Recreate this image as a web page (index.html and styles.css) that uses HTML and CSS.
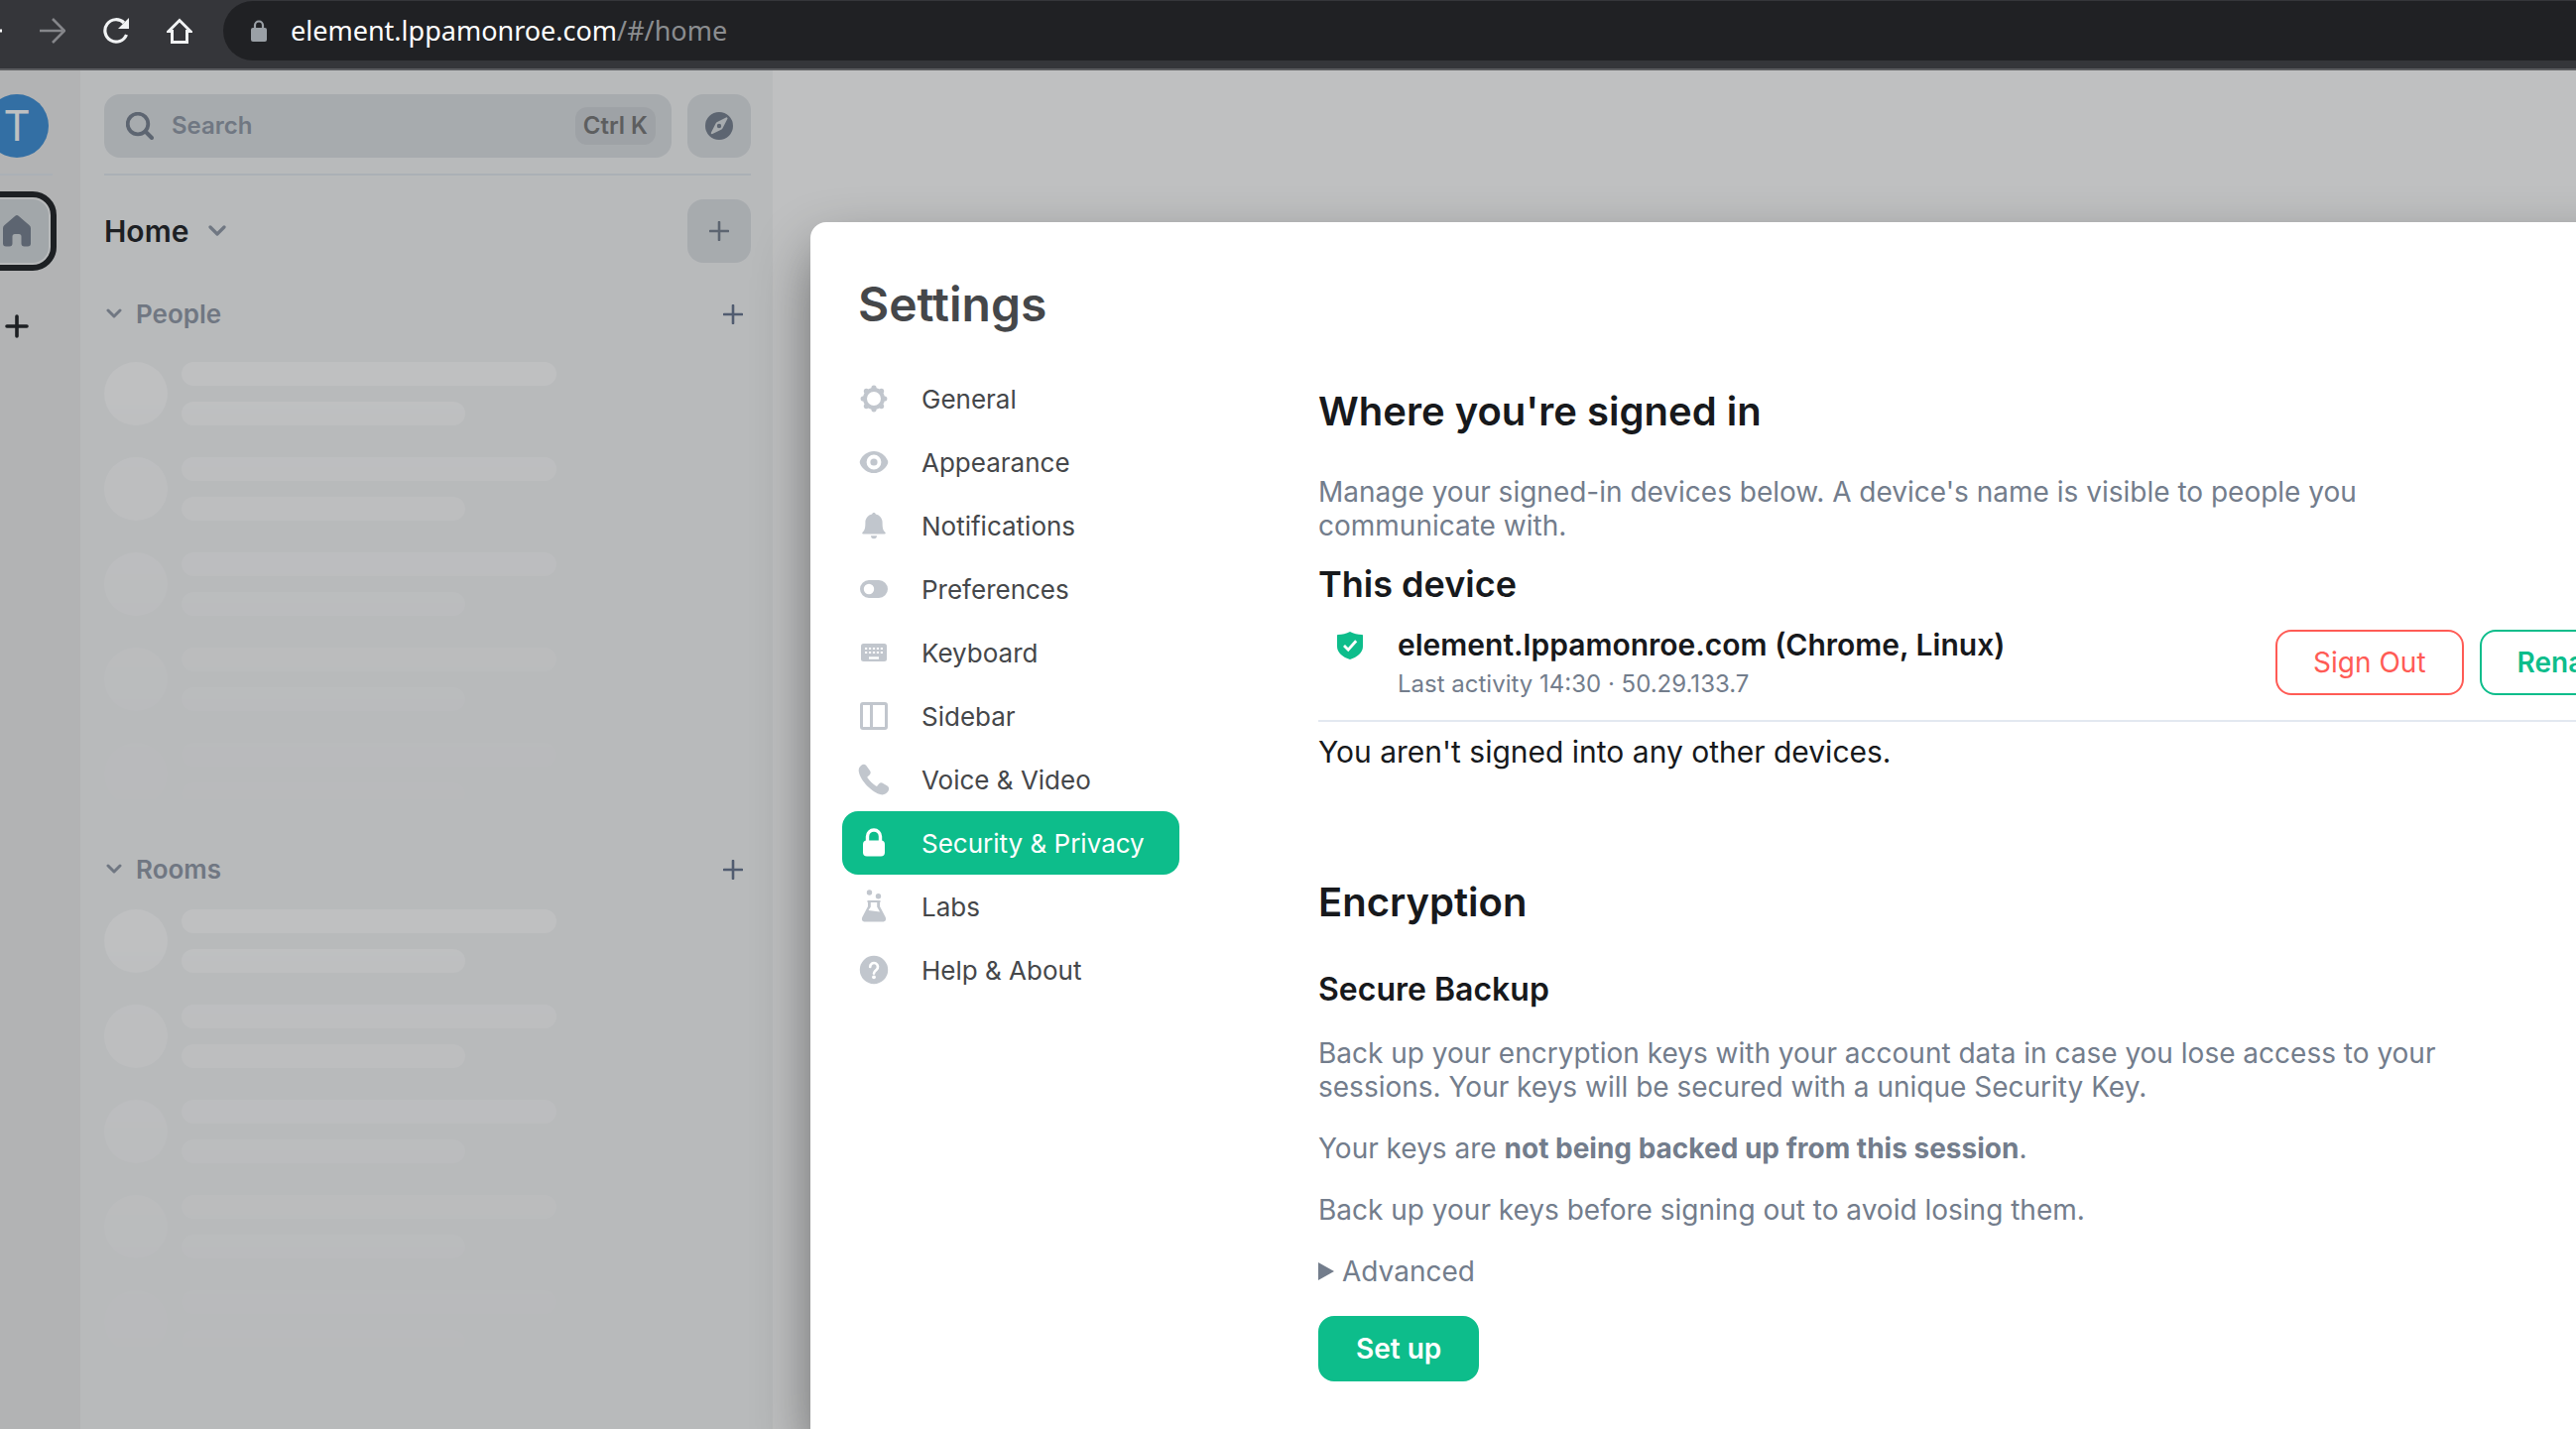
FILE: index.html
```html
<!DOCTYPE html>
<html lang="en">
<head>
<meta charset="utf-8">
<title>Element</title>
<link rel="stylesheet" href="styles.css">
</head>
<body>
<header class="browser-bar">
  <button class="nav-button" aria-label="Back"><svg viewBox="0 0 26 26"><path d="M26 13H3M14 1 2 13l12 12" fill="none" stroke="#fff" stroke-width="3"/></svg></button>
  <button class="nav-button nav-disabled" aria-label="Forward"><svg viewBox="0 0 26 26"><path d="M0 13h23M13 1l12 12-12 12" fill="none" stroke="currentColor" stroke-width="2.6"/></svg></button>
  <button class="nav-button" aria-label="Reload"><svg viewBox="0 0 26 26"><path d="M23.5 17A11.2 11.2 0 1 1 21 5" fill="none" stroke="currentColor" stroke-width="3.2"/><path d="M26 0v11H15z" fill="currentColor"/></svg></button>
  <button class="nav-button" aria-label="Home page"><svg viewBox="0 0 26 26"><path d="M2 13.5 13 2.500l11 11h-3.500V24.500h-15V13.500z" fill="none" stroke="currentColor" stroke-width="3"/></svg></button>
  <div class="address">
    <svg class="address-lock" viewBox="0 0 16 22"><path d="M4 9V5.500a4 4 0 0 1 8 0V9" fill="none" stroke="currentColor" stroke-width="2.200"/><rect y="8" width="16" height="14" rx="2" fill="currentColor"/></svg>
    <span class="address-text">element.lppamonroe.com<span class="address-path">/#/home</span></span>
  </div>
</header>

<div class="stage">
  <div class="app">
    <nav class="rail" aria-label="Spaces">
      <button class="avatar" aria-label="User menu">T</button>
      <hr class="rail-line">
      <button class="space-home" aria-label="Home"><span class="space-tile"><svg viewBox="0 0 28 32"><path d="M12.300.800a2.500 2.500 0 0 1 3.400 0l11 9.500A4 4 0 0 1 28 13.200V28.500a3 3 0 0 1-3 3h-3.500a3 3 0 0 1-3-3V21.500a2.500 2.500 0 0 0-2.500-2.500h-4a2.500 2.500 0 0 0-2.500 2.500v7a3 3 0 0 1-3 3H3a3 3 0 0 1-3-3V13.200a4 4 0 0 1 1.300-2.900z" fill="currentColor"/></svg></span></button>
      <button class="space-add" aria-label="Create a space"><svg viewBox="0 0 24 24"><path d="M12 2v20M2 12h20" stroke="currentColor" stroke-width="3.600" stroke-linecap="round"/></svg></button>
    </nav>

    <aside class="panel">
      <div class="search-row">
        <label class="search">
          <svg class="search-icon" viewBox="0 0 28 28"><circle cx="12" cy="12" r="10.300" fill="none" stroke="currentColor" stroke-width="3.800"/><path d="m19.500 19.500 6.500 6.500" stroke="currentColor" stroke-width="4" stroke-linecap="round"/></svg>
          <input class="search-input" type="text" placeholder="Search" aria-label="Search">
          <kbd class="shortcut">Ctrl K</kbd>
        </label>
        <button class="tile-button" aria-label="Explore rooms"><svg class="icon-28" viewBox="0 0 28 28"><path fill-rule="evenodd" fill="currentColor" d="M14 0a14 14 0 1 0 0 28 14 14 0 0 0 0-28zM22.400 6.800l-5 9.800c-.200.400-.500.700-.900.900l-9.200 4.600c-.900.400-1.800-.500-1.400-1.400l4.800-9.500c.200-.400.500-.700.900-.900l9.400-4.900c.900-.400 1.800.500 1.400 1.400zM14 11.800a2.200 2.200 0 1 0 0 4.400 2.200 2.200 0 0 0 0-4.400z"/></svg></button>
      </div>
      <hr class="panel-line">
      <div class="home-row">
        <button class="home-menu">Home <svg class="chevron" viewBox="0 0 18 12"><path d="m2 2 7 7 7-7" fill="none" stroke="currentColor" stroke-width="3.200" stroke-linecap="round" stroke-linejoin="round"/></svg></button>
        <button class="tile-button" aria-label="Add"><svg class="icon-20" viewBox="0 0 20 20"><path d="M10 1v18M1 10h18" stroke="currentColor" stroke-width="2.600" stroke-linecap="round"/></svg></button>
      </div>

      <section class="room-list">
        <div class="list-head">
          <button class="list-toggle"><svg class="chevron-small" viewBox="0 0 16 12"><path d="m2 2 6 6 6-6" fill="none" stroke="currentColor" stroke-width="3" stroke-linecap="round" stroke-linejoin="round"/></svg>People</button>
          <button class="list-add" aria-label="Start chat"><svg class="icon-20" viewBox="0 0 20 20"><path d="M10 1v18M1 10h18" stroke="currentColor" stroke-width="2.600" stroke-linecap="round"/></svg></button>
        </div>
        <div class="skeleton skeleton-people">
          <div class="ghost"><i></i><b></b><b></b></div>
          <div class="ghost"><i></i><b></b><b></b></div>
          <div class="ghost"><i></i><b></b><b></b></div>
          <div class="ghost"><i></i><b></b><b></b></div>
          <div class="ghost"><i></i><b></b><b></b></div>
        </div>
      </section>
      <section class="room-list">
        <div class="list-head">
          <button class="list-toggle"><svg class="chevron-small" viewBox="0 0 16 12"><path d="m2 2 6 6 6-6" fill="none" stroke="currentColor" stroke-width="3" stroke-linecap="round" stroke-linejoin="round"/></svg>Rooms</button>
          <button class="list-add" aria-label="Add room"><svg class="icon-20" viewBox="0 0 20 20"><path d="M10 1v18M1 10h18" stroke="currentColor" stroke-width="2.600" stroke-linecap="round"/></svg></button>
        </div>
        <div class="skeleton">
          <div class="ghost"><i></i><b></b><b></b></div>
          <div class="ghost"><i></i><b></b><b></b></div>
          <div class="ghost"><i></i><b></b><b></b></div>
          <div class="ghost"><i></i><b></b><b></b></div>
          <div class="ghost"><i></i><b></b><b></b></div>
        </div>
      </section>
    </aside>
    <main class="room-view"></main>
  </div>

  <div class="backdrop"></div>

  <div class="dialog" role="dialog" aria-labelledby="dialog-title">
    <div class="tabs-column">
      <h1 class="dialog-title" id="dialog-title">Settings</h1>
      <div class="tabs" role="tablist">
        <button class="tab" role="tab"><svg viewBox="0 0 32 32"><circle cx="16" cy="16" r="9" fill="none" stroke="currentColor" stroke-width="4"/><g fill="currentColor"><circle cx="16" cy="5.200" r="2.600"/><circle cx="16" cy="26.800" r="2.600"/><circle cx="5.200" cy="16" r="2.600"/><circle cx="26.800" cy="16" r="2.600"/><circle cx="8.400" cy="8.400" r="2.600"/><circle cx="23.600" cy="8.400" r="2.600"/><circle cx="8.400" cy="23.600" r="2.600"/><circle cx="23.600" cy="23.600" r="2.600"/></g></svg>General</button>
        <button class="tab" role="tab"><svg viewBox="0 0 32 32"><path fill="currentColor" fill-rule="evenodd" d="M16 5c6.500 0 11.800 4.300 14 9.600.400 1 .400 1.800 0 2.800-2.200 5.300-7.500 9.600-14 9.600S4.200 22.700 2 17.400c-.400-1-.400-1.800 0-2.800C4.200 9.300 9.500 5 16 5zm0 3.600a7.400 7.400 0 1 0 0 14.800 7.400 7.400 0 0 0 0-14.800z"/><circle cx="16" cy="16" r="3.600" fill="currentColor"/></svg>Appearance</button>
        <button class="tab" role="tab"><svg viewBox="0 0 32 32"><path fill="currentColor" d="M16 3c1 0 1.700.700 1.900 1.600 4 .900 6.700 4.200 6.700 8.400 0 5 .500 7.600 2.600 9.600 1 1 .600 2-.400 2H5.200c-1 0-1.400-1-.400-2 2.100-2 2.600-4.600 2.600-9.600 0-4.200 2.700-7.500 6.700-8.400C14.300 3.700 15 3 16 3zM13 26.300h6a3 3 0 0 1-6 0z"/></svg>Notifications</button>
        <button class="tab" role="tab"><svg viewBox="0 0 32 32"><path fill="currentColor" fill-rule="evenodd" d="M11 7h10a9 9 0 0 1 0 18H11a9 9 0 0 1 0-18zm0 3.800a5.200 5.200 0 1 0 0 10.400 5.200 5.200 0 0 0 0-10.400z"/></svg>Preferences</button>
        <button class="tab" role="tab"><svg viewBox="0 0 32 32"><rect x="3" y="7" width="26" height="18" rx="2.500" fill="currentColor"/><path d="M7 12h18M7 16h18" stroke="#fff" stroke-width="2.200" stroke-dasharray="2.200 1.750"/><path d="M11 21.500h10" stroke="#fff" stroke-width="2.400"/></svg>Keyboard</button>
        <button class="tab" role="tab"><svg viewBox="0 0 32 32"><path fill="none" stroke="currentColor" stroke-width="3" d="M5 3.500h22q1.500 0 1.500 1.500v22q0 1.500-1.500 1.500H5q-1.500 0-1.500-1.500V5Q3.500 3.500 5 3.500zM13.500 4v24"/></svg>Sidebar</button>
        <button class="tab" role="tab"><svg viewBox="0 0 32 32"><path fill="currentColor" d="M3.300 1.700C5 .500 7 .600 8.300 2l3.800 5.300c1 1.400.700 3-.500 4.100l-2 1.800c-.300.300-.300.700-.100 1 2.200 3.200 5 6 8.800 8.500.400.200.800.200 1.100-.100l1.600-2c1.200-1.400 2.900-1.600 4.300-.700l4.300 2.700c1.700 1.200 2.100 3 1 5-1.400 2.700-4.200 4.200-7.500 3.700C15 30 1.800 17 .700 7.600.500 5.300 1.400 3 3.300 1.700z"/></svg>Voice &amp; Video</button>
        <button class="tab tab-active" role="tab" aria-selected="true"><svg viewBox="0 0 32 32"><path d="M9.500 15V9.500a6.500 6.500 0 0 1 13 0V15" fill="none" stroke="currentColor" stroke-width="3.400"/><rect x="5" y="13.500" width="22" height="16" rx="4" fill="currentColor"/></svg>Security &amp; Privacy</button>
        <button class="tab" role="tab"><svg viewBox="0 0 32 36"><g fill="currentColor"><circle cx="11.500" cy="4" r="2.700"/><circle cx="20.500" cy="7.700" r="2.700"/><path fill-rule="evenodd" d="M9.500 12h13v2H22v4l5.500 10.500c1.400 2.800.200 5-2.500 5H7c-2.700 0-3.900-2.200-2.500-5L10 18v-4h-.500zm3.300 2v4.500L10.500 22l11.500 1.500-2.800-5V14z"/></g></svg>Labs</button>
        <button class="tab" role="tab"><svg viewBox="0 0 32 32"><circle cx="16" cy="16" r="14.200" fill="currentColor"/><path d="M12.200 13a3.900 3.900 0 1 1 6.300 3c-1.700 1.300-2.500 1.800-2.500 3.600" fill="none" stroke="#fff" stroke-width="2.700" stroke-linecap="round"/><circle cx="16" cy="23.300" r="1.900" fill="#fff"/></svg>Help &amp; About</button>
      </div>
    </div>

    <div class="content">
      <section class="sessions">
        <h2 class="heading">Where you're signed in</h2>
        <p class="copy">Manage your signed-in devices below. A device's name is visible to people you communicate with.</p>
        <h3 class="device-heading">This device</h3>
        <div class="device">
          <svg class="shield" viewBox="0 0 26 28"><path d="M13 0c3.500 1.800 8 3 12 3 .600 0 1 .400 1 1v11c0 6-6 11-13 13C6 26 0 21 0 15V4c0-.600.400-1 1-1 4 0 8.500-1.200 12-3z" fill="#0dbd8b"/><path d="m7 14 4.200 4.200 8-9" fill="none" stroke="#fff" stroke-width="2.800"/></svg>
          <div class="device-info">
            <div class="device-name">element.lppamonroe.com (Chrome, Linux)</div>
            <div class="device-meta">Last activity 14:30 · 50.29.133.7</div>
          </div>
          <div class="device-actions">
            <button class="button button-danger">Sign Out</button>
            <button class="button button-outline">Rename</button>
          </div>
        </div>
        <p class="note">You aren't signed into any other devices.</p>
      </section>
      <section>
        <h2 class="heading">Encryption</h2>
        <h3 class="subheading">Secure Backup</h3>
        <div class="backup">
          <p class="copy">Back up your encryption keys with your account data in case you lose access to your sessions. Your keys will be secured with a unique Security Key.</p>
          <p class="copy">Your keys are <strong>not being backed up from this session</strong>.</p>
          <p class="copy">Back up your keys before signing out to avoid losing them.</p>
          <details class="copy"><summary class="advanced">Advanced</summary></details>
          <button class="button button-primary">Set up</button>
        </div>
      </section>
    </div>
  </div>
</div>
</body>
</html>
```
FILE: styles.css
```css
* { box-sizing: border-box; }

body {
  margin: 0;
  min-height: 100vh;
  display: flex;
  flex-direction: column;
  overflow: hidden;
  font-family: Inter, "Liberation Sans", sans-serif;
  color: #17191c;
  background: #fff;
}

h1, h2, h3, p { margin: 0; font-weight: 600; }
p { font-weight: 400; }
hr { margin: 0; border: 0; height: 2px; background: #e3e8f0; }
svg { display: block; flex: none; }
button {
  margin: 0;
  padding: 0;
  border: 0;
  background: none;
  font: inherit;
  color: inherit;
}

/* Browser toolbar */
.browser-bar {
  display: flex;
  align-items: center;
  gap: 38px;
  height: 71px;
  margin-left: -24px;
  padding-bottom: 7px;
  background: #35363a;
  border-bottom: 2px solid #5c5d60;
}
.nav-button { width: 26px; height: 26px; color: #f1f3f4; }
.nav-disabled { color: #85868a; }
.address {
  flex: 1;
  display: flex;
  align-items: center;
  gap: 24px;
  height: 60px;
  margin-left: -7px;
  padding-left: 28px;
  border-radius: 30px 0 0 30px;
  background: #202124;
}
.address-lock { width: 16px; height: 22px; color: #9aa0a6; }
.address-text {
  font-family: "Noto Sans", "Open Sans", sans-serif;
  font-size: 27px;
  line-height: 34px;
  color: #fff;
}
.address-path { color: #8b8d90; }

/* Client behind the dialog */
.stage {
  flex: 1;
  position: relative;
  display: flex;
  overflow: hidden;
}
.app { flex: 1; display: flex; margin-left: -47px; }
.rail {
  width: 128px;
  padding-top: 24px;
  display: flex;
  flex-direction: column;
  align-items: center;
  background: #eceded;
}
.avatar {
  width: 64px;
  height: 64px;
  border-radius: 50%;
  background: #368bd6;
  color: #fff;
  font-size: 42px;
  line-height: 62px;
}
.rail-line { width: 72px; margin: 16px 0; }
.space-home {
  width: 80px;
  height: 80px;
  padding: 2px;
  border: 6px solid #17191c;
  border-radius: 24px;
  background: #f5f6f7;
}
.space-tile {
  display: flex;
  align-items: center;
  justify-content: center;
  height: 64px;
  border-radius: 16px;
  background: #d6dbde;
  color: #737d8c;
}
.space-tile svg { width: 28px; height: 32px; }
.space-add { width: 24px; height: 24px; margin-top: 44px; }

.panel {
  width: 698px;
  padding: 24px 22px 0 24px;
  background: #f5f6f7;
}
.search-row { display: flex; gap: 16px; }
.search {
  flex: 1;
  display: flex;
  align-items: center;
  gap: 18px;
  height: 64px;
  padding: 0 16px 0 22px;
  border-radius: 16px;
  background: #dde1e4;
  color: #737d8c;
}
.search-icon, .icon-28 { width: 28px; height: 28px; }
.icon-20 { width: 20px; height: 20px; }
.search-input {
  flex: 1;
  min-width: 0;
  padding: 0;
  border: 0;
  outline: 0;
  background: none;
  font: 600 24px/32px Inter, sans-serif;
  color: #17191c;
}
.search-input::placeholder { color: #8d97a5; opacity: 1; }
.shortcut {
  padding: 0 8px;
  border-radius: 12px;
  background: #d0d4d8;
  font: 600 24px/38px Inter, sans-serif;
  color: #737373;
}
.tile-button {
  display: flex;
  align-items: center;
  justify-content: center;
  width: 64px;
  height: 64px;
  border-radius: 16px;
  background: #dde1e4;
  color: #737d8c;
}
.panel-line { margin: 16px 0 24px; }
.home-row { display: flex; justify-content: space-between; margin-bottom: 36px; }
.home-menu {
  display: flex;
  align-items: center;
  gap: 20px;
  font-size: 30px;
  font-weight: 600;
}
.chevron { width: 18px; height: 12px; color: #8d97a5; }
.list-head {
  display: flex;
  align-items: center;
  justify-content: space-between;
  height: 32px;
  padding-right: 8px;
  margin-bottom: 24px;
}
.list-toggle {
  display: flex;
  align-items: center;
  gap: 14px;
  padding-left: 2px;
  font-size: 26px;
  font-weight: 600;
  line-height: 34px;
  color: #8d97a5;
}
.chevron-small { width: 16px; height: 12px; }
.list-add { color: #61708b; }
.skeleton {
  display: flex;
  flex-direction: column;
  gap: 32px;
  -webkit-mask-image: linear-gradient(#000, rgba(0, 0, 0, 0.08));
  mask-image: linear-gradient(#000, rgba(0, 0, 0, 0.08));
}
.skeleton-people { margin: 32px 0 48px; }
.ghost {
  display: grid;
  grid-template-columns: 64px 378px;
  grid-template-rows: 24px 24px;
  gap: 16px 14px;
}
.ghost i { grid-row: span 2; border-radius: 50%; background: #fff; }
.ghost b { border-radius: 12px; background: #fff; }
.ghost b:last-child { width: 286px; }
.room-view { flex: 1; background: #fff; }

.backdrop {
  position: absolute;
  inset: 0;
  background: rgba(46, 48, 51, 0.304);
}

/* Settings dialog, wider than the visible window */
.dialog {
  position: absolute;
  top: 153px;
  left: 817px;
  right: -160px;
  bottom: 0;
  display: flex;
  gap: 140px;
  padding: 54px 72px 0 32px;
  border-radius: 16px 16px 0 0;
  background: #fff;
  box-shadow: 4px 30px 60px rgba(0, 0, 0, 0.48);
}
.tabs-column { width: 340px; flex: none; }
.dialog-title {
  padding-left: 16px;
  font-size: 48px;
  line-height: 58px;
  color: #45474a;
}
.tabs { margin-top: 34px; }
.tab {
  display: flex;
  align-items: center;
  gap: 32px;
  width: 100%;
  height: 64px;
  padding-left: 16px;
  border-radius: 16px;
  font-size: 26px;
  color: #45474a;
}
.tab svg { width: 32px; height: 36px; color: #c1c6cd; }
.tab-active { background: #0dbd8b; color: #fff; }
.tab-active svg { color: #fff; }

.content { flex: 1; padding-top: 113px; }
.sessions { margin-bottom: 110px; }
.heading { font-size: 40px; line-height: 48px; }
.copy {
  max-width: 1200px;
  font-size: 28px;
  line-height: 34px;
  color: #737d8c;
}
.heading + .copy { margin: 40px 0 20px; }
.device-heading { font-size: 36px; line-height: 44px; }
.device {
  display: flex;
  align-items: flex-start;
  margin-top: 21px;
  padding: 0 0 20px 19px;
  border-bottom: 2px solid #e3e8f0;
}
.shield { width: 26px; height: 28px; margin: 5px 35px 0 0; }
.device-info { flex: 1; }
.device-name { font-size: 30px; font-weight: 600; line-height: 36px; }
.device-meta { margin-top: 6px; font-size: 24px; line-height: 32px; color: #737d8c; }
.device-actions { display: flex; gap: 16px; padding-top: 3px; }
.note { margin-top: 12px; font-size: 30px; line-height: 36px; }
.subheading { margin: 44px 0 27px; font-size: 32px; line-height: 40px; }
.backup {
  display: flex;
  flex-direction: column;
  align-items: flex-start;
  gap: 28px;
}
.advanced { display: flex; align-items: center; gap: 8px; }
.advanced::before {
  content: "";
  border: 9px solid transparent;
  border-left: 16px solid;
  border-right: 0;
}

.button {
  height: 66px;
  padding: 0 36px;
  border: 2px solid;
  border-radius: 16px;
  font-size: 28px;
  font-weight: 600;
}
.button-danger { color: #ff5b55; font-weight: 400; }
.button-outline { color: #0dbd8b; }
.button-primary { border-color: #0dbd8b; background: #0dbd8b; color: #fff; }
```
